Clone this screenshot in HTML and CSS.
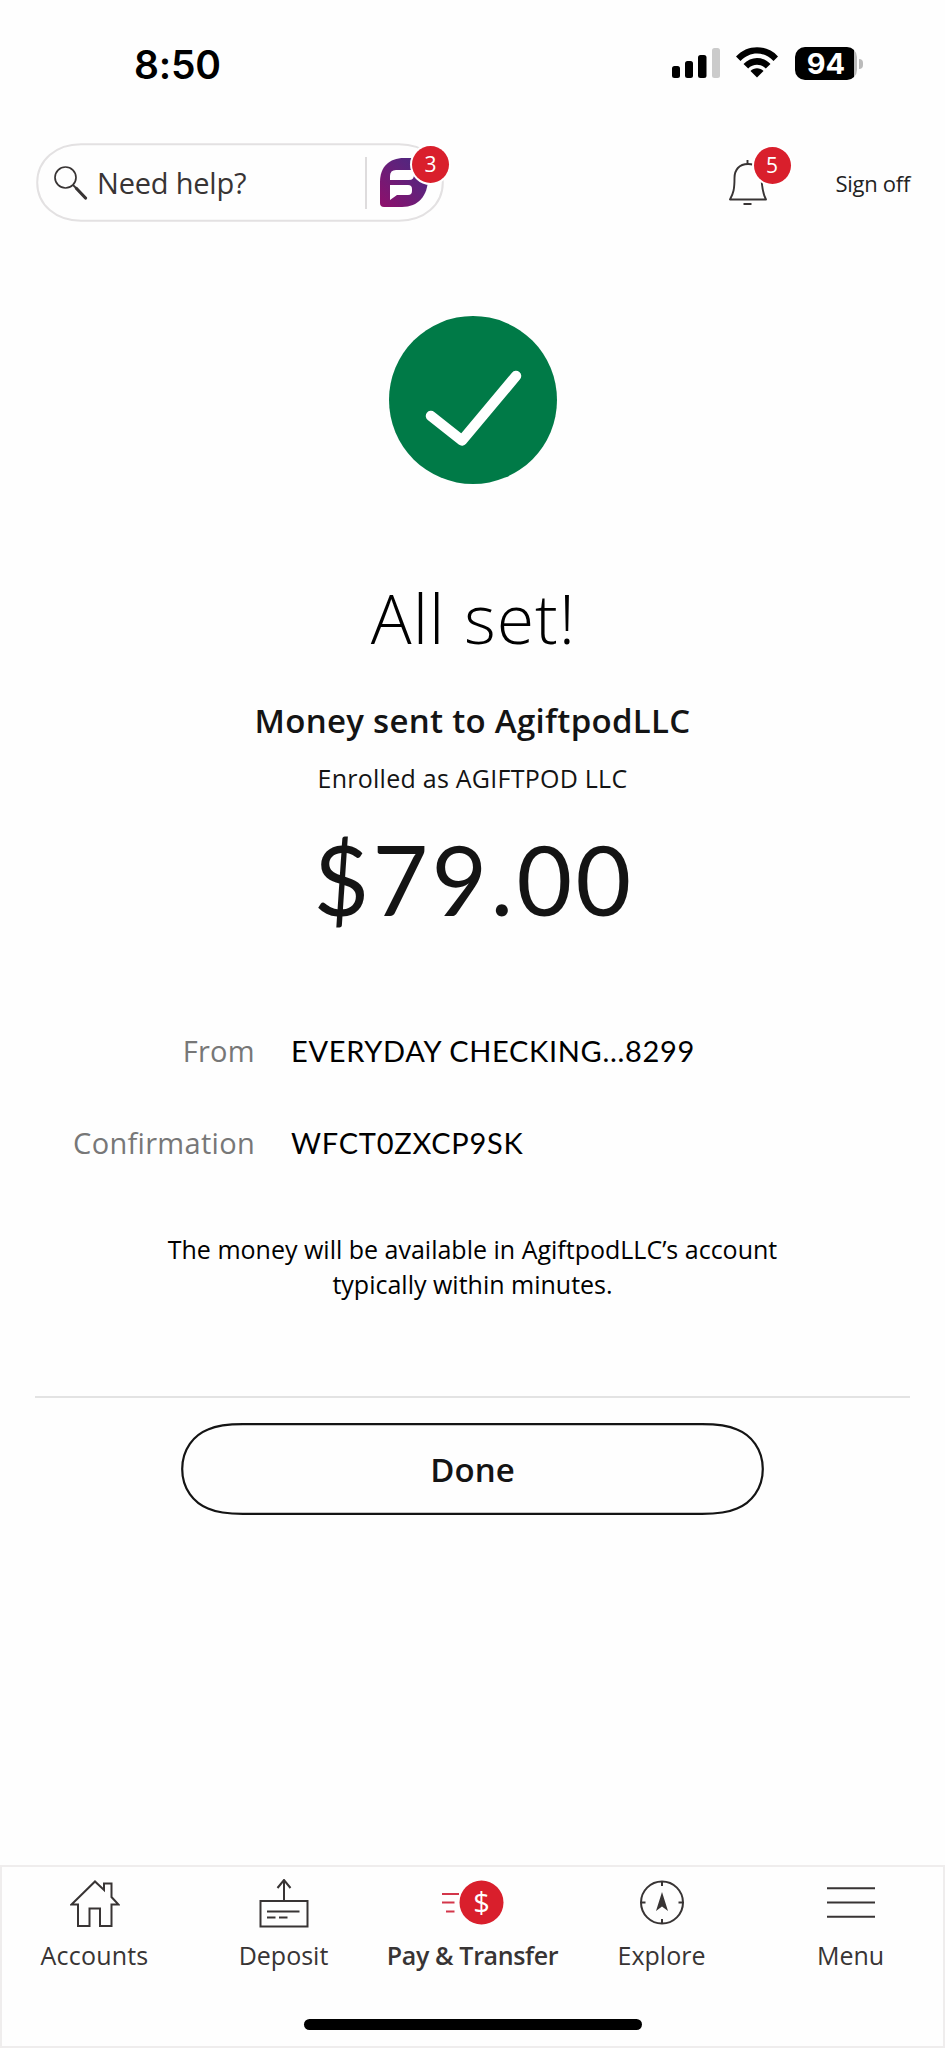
FILE: index.html
```html
<!DOCTYPE html>
<html lang="en">
<head>
<meta charset="utf-8">
<title>Payment sent</title>
<link rel="stylesheet" href="styles.css">
</head>
<body>
<div class="screen">
  <div class="status-bar">
    <span class="time">8:50</span>
    <div class="status-icons">
      <svg class="signal" width="48" height="30" viewBox="0 0 48 30">
        <rect x="0" y="18" width="8" height="12" rx="2.5"/>
        <rect x="13" y="13" width="8" height="17" rx="2.5"/>
        <rect x="26" y="7" width="8.500" height="23" rx="2.5"/>
        <rect x="40" y="0" width="8" height="30" rx="2.5" fill="#cbcbcb"/>
      </svg>
      <svg class="wifi" width="42" height="31" viewBox="0 0 42 31">
        <path d="M0 9.500C11-3 31-3 42 9.500L37.500 14C28 4 14 4 4.500 14Z"/>
        <path d="M7.500 17C15 9 27 9 34.500 17L29.800 21.500C25 16.500 17 16.500 12.200 21.500Z"/>
        <path d="M14.500 24C18 20.300 24 20.300 27.500 24L21 30.500Z"/>
      </svg>
      <div class="battery"><span class="battery-level">94</span><span class="battery-nub"></span></div>
    </div>
  </div>

  <header class="top-bar">
    <div class="search">
      <svg class="search-outline" width="408" height="79" viewBox="0 0 408 79"><path d="M45 1.200H363C388 1.200 406.800 17 406.800 39.500S388 77.800 363 77.800H45C20 77.800 1.200 62 1.200 39.500S20 1.200 45 1.200Z"/></svg>
      <svg class="search-icon" width="34" height="34" viewBox="0 0 34 34" fill="none" stroke="#383434">
        <circle cx="11.500" cy="11.500" r="10.500" stroke-width="1.700"/>
        <path d="M19 19L23 23" stroke-width="1.800"/><path d="M22.500 22.500L31.500 32" stroke-width="3.200" stroke-linecap="round"/>
      </svg>
      <span class="search-text">Need help?</span>
      <span class="search-divider"></span>
      <div class="assistant">
        <svg width="49" height="49" viewBox="0 0 49 49">
          <defs><linearGradient id="plum" x1="0" y1="1" x2="1" y2="0"><stop offset="0" stop-color="#8f0f6b"/><stop offset=".55" stop-color="#64207a"/><stop offset="1" stop-color="#442b82"/></linearGradient></defs>
          <path fill="url(#plum)" d="M24 0H43Q48 0 48 5V20C48 38 38 49 22 49H4Q0 49 0 45V24C0 9 9 0 24 0Z"/>
          <path fill="#fff" d="M10 22V18Q10 12 16 12H34V17Q34 22 29 22Z"/>
          <path fill="#fff" d="M10 27H28Q32 27 32 31V33Q32 37 28 37H17L10 42Z"/>
        </svg>
        <span class="badge">3</span>
      </div>
    </div>
    <div class="top-actions">
      <div class="bell">
        <svg width="38" height="46" viewBox="0 0 38 46" fill="none" stroke="#383434" stroke-width="1.900" stroke-linejoin="round">
          <path d="M19 4C10 4 5.500 10 5.500 18C5.500 29 4.500 33 1 39.500H37C34 34 33 29 32.500 18C32 10 28 4 19 4Z"/>
          <path d="M18.500 0V4M14.500 44H22.500"/>
        </svg>
        <span class="badge">5</span>
      </div>
      <span class="sign-off">Sign off</span>
    </div>
  </header>

  <main class="result">
    <svg class="success" width="168" height="168" viewBox="0 0 168 168"><circle cx="84" cy="84" r="84" fill="#007a47"/><path d="M42 100L73 124.500L127 60" fill="none" stroke="#fff" stroke-width="10.500" stroke-linecap="round" stroke-linejoin="round"/></svg>
    <h1 class="title">All set!</h1>
    <p class="recipient">Money sent to AgiftpodLLC</p>
    <p class="enrolled">Enrolled as AGIFTPOD LLC</p>
    <p class="amount">$79.00</p>
    <dl class="details">
      <dt>From</dt><dd class="account">EVERYDAY CHECKING...8299</dd>
      <dt>Confirmation</dt><dd class="code">WFCT0ZXCP9SK</dd>
    </dl>
    <p class="note">The money will be available in AgiftpodLLC’s account<br>typically within minutes.</p>
  </main>

  <div class="actions">
    <button class="done"><svg class="done-outline" width="583" height="92" viewBox="0 0 583 92"><path d="M62 1.200H521C535 1.200 546 2 556 6.500C570 12 581.800 26 581.800 46S570 80 556 85.500C546 90 535 90.800 521 90.800H62C48 90.800 37 90 27 85.500C13 80 1.200 66 1.200 46S13 12 27 6.500C37 2 48 1.200 62 1.200Z"/></svg><span>Done</span></button>
  </div>

  <nav class="tabs">
    <div class="tab-row">
      <div class="tab"><svg width="50" height="50" viewBox="0 0 50 50"><path d="M1.500 25.500L25 2.500L34 11V4.500H41.500V18L48.500 25.500H41.500V47H30V29.500H19.500V47H8V25.500Z"/></svg><span class="t-accounts">Accounts</span></div>
      <div class="tab"><svg width="50" height="50" viewBox="0 0 50 50"><path d="M1.500 22H48.500V47.500H1.500ZM25 22V1M18.500 9L25 1L31.500 9M8 32.500H40.500M8 38.500H16.500M20 38.500H28.500"/></svg><span class="t-deposit">Deposit</span></div>
      <div class="tab active"><svg width="62" height="50" viewBox="0 0 62 50"><circle class="coin" cx="39.500" cy="23.500" r="22"/><path class="speed" d="M0 15H17M0 23.500H12.500M4 32.500H12.500"/><text x="39.500" y="33.500" text-anchor="middle" class="dollar">$</text></svg><span class="t-pay">Pay &amp; Transfer</span></div>
      <div class="tab"><svg width="50" height="50" viewBox="0 0 50 50"><circle cx="25" cy="23.500" r="21"/><path d="M25 2.500V7M25 40V44.500M4 23.500H8.500M41.500 23.500H46"/><path class="needle" d="M25 13L31 32L25 27.500L19 32Z"/></svg><span class="t-explore">Explore</span></div>
      <div class="tab"><svg width="50" height="50" viewBox="0 0 50 50"><path d="M1 9.300H49M1 23.500H49M1 37.800H49"/></svg><span class="t-menu">Menu</span></div>
    </div>
    <div class="home-indicator"></div>
  </nav>
</div>
</body>
</html>
```
FILE: styles.css
```css
* { box-sizing: border-box; }
body { margin: 0; background: #fefefe; font-family: "Open Sans", "Noto Sans", sans-serif; color: #141414; }
svg { display: block; flex: none; }
h1, p, dl, dd { margin: 0; }
.screen { width: 945px; height: 2048px; display: flex; flex-direction: column; }

.status-bar { height: 143px; padding: 47px 82px 0 134px; display: flex; justify-content: space-between; align-items: flex-start; color: #000; }
.time { font: 600 39px/35px "Inter", sans-serif; letter-spacing: -.2px; }
.status-icons { display: flex; align-items: flex-start; gap: 16px; }
.signal { margin-top: 1px; }
.battery { display: flex; align-items: center; gap: 2px; margin-left: 1px; }
.battery-level { width: 62px; height: 33px; border-radius: 10px; background: linear-gradient(90deg, #000 59px, #bbb 59px); color: #fff; font: 700 29px/34px "Inter", sans-serif; text-align: center; }
.battery-nub { width: 4px; height: 10px; border-radius: 0 4px 4px 0; background: #bbb; }

.top-bar { height: 173px; padding: 0 35px 0 36px; display: flex; justify-content: space-between; align-items: flex-start; }
.search { position: relative; width: 408px; height: 79px; padding-left: 18px; display: flex; align-items: center; color: #383434; }
.search-outline { position: absolute; left: 0; top: 0; fill: none; stroke: #e3e1e2; stroke-width: 2; }
.search-text { width: 268px; margin-left: 9px; font-size: 29px; line-height: 40px; letter-spacing: -.2px; }
.search-divider { width: 2px; height: 52px; background: #dedcdd; }
.assistant { position: relative; margin-left: 13px; }
.badge { position: absolute; width: 37px; height: 37px; border-radius: 50%; background: #d91f2c; box-shadow: 0 0 0 2px #fff; color: #fff; font-size: 21px; line-height: 36px; text-align: center; }
.assistant .badge { left: 32px; top: -12px; }
.top-actions { display: flex; align-items: center; height: 79px; gap: 69px; }
.bell { position: relative; }
.bell .badge { left: 25px; top: -13px; }
.sign-off { font-size: 22px; line-height: 30px; letter-spacing: -.3px; color: #222; }

.result { height: 1080px; display: flex; flex-direction: column; align-items: center; text-align: center; }
.title { margin-top: 88px; padding-left: 2px; font-size: 68px; line-height: 92px; font-weight: 300; letter-spacing: 1px; color: #000; }
.recipient { margin-top: 35px; font-size: 33px; line-height: 44px; font-weight: 600; letter-spacing: .3px; }
.enrolled { margin-top: 18px; font-size: 25px; line-height: 34px; letter-spacing: .25px; }
.amount { margin-top: 24px; padding-left: 3px; font-family: "Lato", "Open Sans", sans-serif; font-size: 96px; line-height: 120px; letter-spacing: 3.300px; }
.details { width: 945px; margin-top: 92px; display: grid; grid-template-columns: 255px 1fr; column-gap: 36px; row-gap: 52px; font-size: 29px; line-height: 40px; }
.details dt { text-align: right; color: #777; letter-spacing: .3px; }
.details dd { text-align: left; color: #000; font-family: "Lato", "Open Sans", sans-serif; }
.details .account { letter-spacing: .680px; }
.details .code { letter-spacing: .750px; }
.note { margin-top: 69px; font-size: 25px; line-height: 34.500px; color: #000; }

.actions { margin: 0 35px; height: 469px; border-top: 2px solid #e3e3e3; padding-top: 25px; display: flex; justify-content: center; align-items: flex-start; }
.done { position: relative; width: 583px; height: 92px; padding: 1px 0 0; border: 0; background: none; font: 600 33px/44px "Open Sans", sans-serif; color: #141414; }
.done-outline { position: absolute; left: 0; top: 0; fill: none; stroke: #141414; stroke-width: 2.200; }

.tabs { height: 183px; border: 2px solid #efeded; display: flex; flex-direction: column; align-items: center; }
.tab-row { width: 945px; height: 152px; display: grid; grid-template-columns: repeat(5, 1fr); }
.tab { padding-top: 12px; display: flex; flex-direction: column; align-items: center; gap: 9px; font-size: 25px; line-height: 34px; color: #383434; white-space: nowrap; }
.tab svg { fill: none; stroke: #383434; stroke-width: 2; }
.tab .needle { fill: #383434; stroke: none; }
.tab.active { font-weight: 600; letter-spacing: -.35px; }
.tab .t-accounts { letter-spacing: .2px; }
.tab .coin { fill: #d91f2c; stroke: none; }
.tab .speed { stroke: #d3364a; }
.tab .dollar { fill: #fff; stroke: none; font-size: 29px; font-weight: 400; letter-spacing: 0; }
.home-indicator { width: 338px; height: 11px; border-radius: 6px; background: #000; }
```
